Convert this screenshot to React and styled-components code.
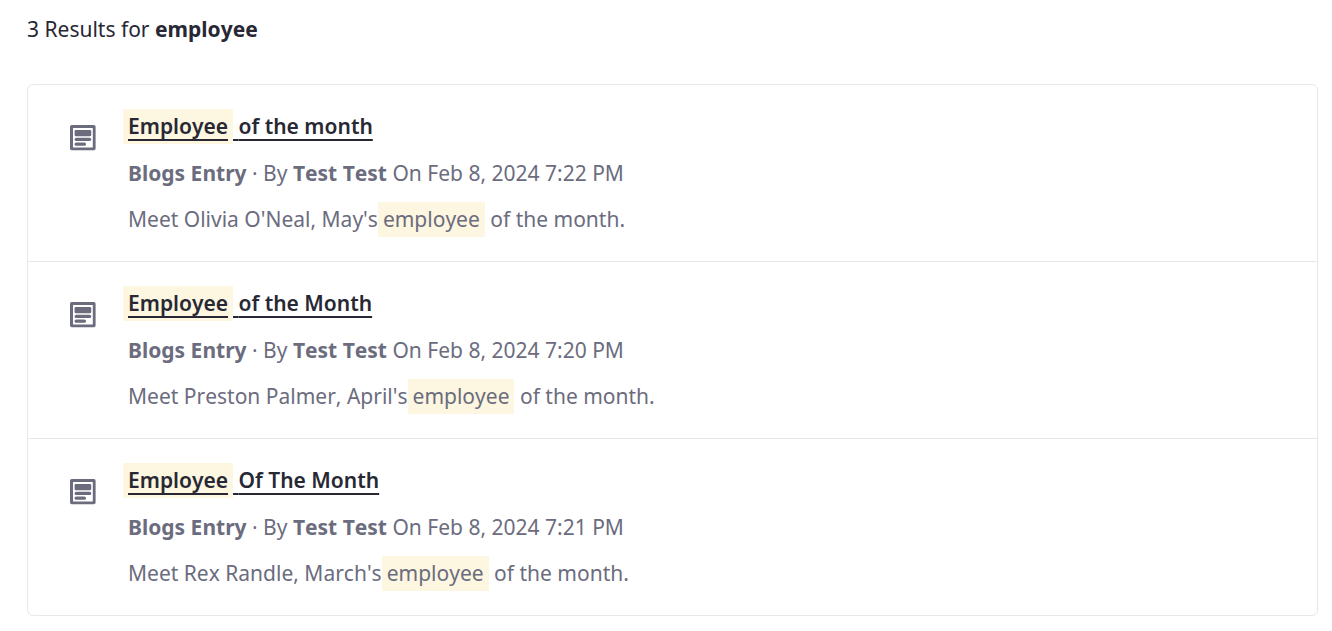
import React from "react";
import styled, { createGlobalStyle } from "styled-components";

const GlobalStyle = createGlobalStyle`
  * { box-sizing: border-box; }
  body {
    margin: 0;
    background: #fff;
    color: #272833;
    font-family: "Noto Sans", "Open Sans", sans-serif;
    font-size: 21px;
    line-height: 32px;
    font-kerning: none;
  }
`;

const Page = styled.main`
  padding: 13px 14px 15px 27px;
`;

const Summary = styled.p`
  margin: 0 0 39px;
`;

const List = styled.ul`
  margin: 0;
  padding: 0;
  list-style: none;
  border: 1px solid #e7e7ed;
  border-radius: 6px;
`;

const Item = styled.li`
  display: flex;
  gap: 32px;
  padding: 24px 24px 24px 42px;

  & + & {
    border-top: 1px solid #e7e7ed;
  }
`;

const Icon = styled.svg`
  flex: none;
  width: 26px;
  height: 26px;
  margin-top: 16px;
  color: #6b6c7e;
`;

const Body = styled.div`
  flex: 1;
  min-width: 0;
  color: #6b6c7e;
  line-height: 35px;
`;

const Heading = styled.h2`
  margin: 0 0 12px -5px;
  font-size: inherit;
  font-weight: 600;
`;

const Title = styled.a`
  color: #272833;
  text-decoration: underline;
  text-decoration-thickness: 2px;
  text-decoration-skip-ink: none;
  text-underline-offset: 5px;
`;

const Meta = styled.p`
  margin: 0 0 11px;
`;

const Intro = styled.p`
  margin: 0;
`;

const Mark = styled.mark`
  display: inline-block;
  padding: 0 5px;
  color: inherit;
  background: #fdf6e0;
  text-decoration: inherit;
`;

const results = [
  { rest: "of the month", time: "7:22 PM", intro: "Meet Olivia O'Neal, May's" },
  { rest: "of the Month", time: "7:20 PM", intro: "Meet Preston Palmer, April's" },
  { rest: "Of The Month", time: "7:21 PM", intro: "Meet Rex Randle, March's" },
];

const BlogIcon = () => (
  <Icon viewBox="0 0 26 26" fill="currentColor" aria-hidden="true">
    <path
      fillRule="evenodd"
      d="M1.7 0H23.9Q25.6 0 25.6 1.7V23.6Q25.6 25.3 23.9 25.3H1.7Q0 25.3 0 23.6V1.7Q0 0 1.7 0ZM3 3V22.6H22.8V3Z"
    />
    <rect x="4.6" y="4.9" width="16.6" height="6.3" rx="1.3" />
    <rect x="4.6" y="12.7" width="16.6" height="3.3" rx="1.6" />
    <rect x="4.6" y="17.5" width="11.4" height="3.3" rx="1.6" />
  </Icon>
);

export default function App() {
  return (
    <Page>
      <GlobalStyle />
      <Summary>3 Results for <strong>employee</strong></Summary>
      <List>
        {results.map((r) => (
          <Item key={r.time}>
            <BlogIcon />
            <Body>
              <Heading><Title href="#"><Mark>Employee</Mark> {r.rest}</Title></Heading>
              <Meta><strong>Blogs Entry</strong> · By <strong>Test Test</strong> On Feb 8, 2024 {r.time}</Meta>
              <Intro>{r.intro}<Mark>employee</Mark> of the month.</Intro>
            </Body>
          </Item>
        ))}
      </List>
    </Page>
  );
}
